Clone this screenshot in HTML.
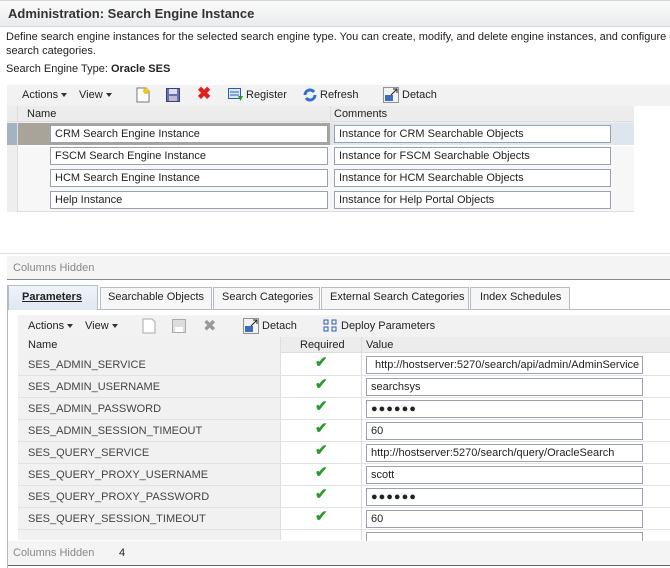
<!DOCTYPE html>
<html><head><style>
*{margin:0;padding:0;box-sizing:border-box}
body{width:670px;height:568px;overflow:hidden;background:#fff;font-family:"Liberation Sans",sans-serif;font-size:11px;color:#222;position:relative}
.a{position:absolute;white-space:nowrap}
.inp{position:absolute;height:18px;border:1px solid #9aa3ad;background:#fff;padding-left:4px;line-height:16px;font-size:11px;color:#222}
.tb{color:#222}
.dd{display:inline-block;border-left:3px solid transparent;border-right:3px solid transparent;border-top:4px solid #333;margin-left:3px;vertical-align:middle}
.row{position:absolute;left:8px;height:22px;border-bottom:1px solid #e4e4e4}
.chk{position:absolute;font-size:15px;color:#2a9a2a;font-weight:bold}
</style></head><body>
<!-- title -->
<div class="a" style="left:0;top:0;width:670px;height:27px;background:linear-gradient(#fbfbfb,#e9ebed);border-top:1px solid #d6d6d6;border-bottom:1px solid #d0d3d6"></div>
<div class="a" style="left:8px;top:6px;font-size:13px;font-weight:bold;color:#333">Administration: Search Engine Instance</div>
<div class="a" style="left:6px;top:31px">Define search engine instances for the selected search engine type. You can create, modify, and delete engine instances, and configure e</div>
<div class="a" style="left:6px;top:45px">search categories.</div>
<div class="a" style="left:6px;top:63px">Search Engine Type: <b>Oracle SES</b></div>
<!-- toolbar 1 -->
<div class="a" style="left:7px;top:85px;width:663px;height:21px;background:#f2f2f2"></div>
<div class="a tb" style="left:22px;top:89px">Actions<span class="dd"></span></div>
<div class="a tb" style="left:79px;top:89px">View<span class="dd"></span></div>
<svg class="a" style="left:135px;top:87px" width="16" height="16"><path d="M2 1h9l3 3v11H2z" fill="#fff" stroke="#777"/><circle cx="11" cy="4" r="3" fill="#f5c518"/></svg>
<svg class="a" style="left:166px;top:88px" width="14" height="14"><rect x="0.5" y="0.5" width="13" height="13" fill="#6a6fb0" stroke="#3a3f80"/><rect x="3" y="1" width="8" height="5" fill="#dde"/><rect x="3" y="8" width="8" height="5" fill="#bbc"/></svg>
<div class="a" style="left:197px;top:84px;font-size:17px;font-weight:bold;color:#e02020">✖</div>
<svg class="a" style="left:228px;top:88px" width="16" height="14"><rect x="0.5" y="0.5" width="12" height="10" fill="#dde8f6" stroke="#2c5fa8"/><path d="M2 4h9M2 7h9" stroke="#2c5fa8"/><path d="M10 8h5l-2.5 5z" fill="#2a9a2a"/></svg>
<div class="a tb" style="left:246px;top:89px">Register</div>
<svg class="a" style="left:302px;top:87px" width="16" height="16"><path d="M3 8a5 5 0 0 1 9-3M13 8a5 5 0 0 1-9 3" stroke="#2e6fd0" stroke-width="3" fill="none"/></svg>
<div class="a tb" style="left:320px;top:89px">Refresh</div>
<svg class="a" style="left:383px;top:87px" width="16" height="16"><rect x="0.5" y="0.5" width="15" height="15" fill="none" stroke="#333" stroke-dasharray="1 1"/><rect x="2" y="8" width="8" height="6" fill="#3a6fc0"/><path d="M8 8l6-6M10 2h4v4" stroke="#222" fill="none"/></svg>
<div class="a tb" style="left:402px;top:89px">Detach</div>
<!-- table 1 -->
<div class="a" style="left:7px;top:106px;width:627px;height:106px;background:#eee"></div>
<div class="a" style="left:7px;top:106px;width:627px;height:16px;background:#ececec;border-bottom:1px solid #ddd"></div>
<div class="a" style="left:17px;top:106px;width:1px;height:106px;background:#ddd"></div>
<div class="a" style="left:330px;top:106px;width:1px;height:16px;background:#ddd"></div>
<div class="a" style="left:27px;top:108px">Name</div>
<div class="a" style="left:334px;top:108px">Comments</div>
<div class="a" style="left:7px;top:123px;width:627px;height:22px;background:#dfe5ec"></div>
<div class="a" style="left:7px;top:123px;width:10px;height:22px;background:#a4b3c4"></div>
<div class="a" style="left:18px;top:123px;width:312px;height:22px;background:#a9a49a"></div>
<div class="a" style="left:18px;top:145px;width:616px;height:1px;background:#fff"></div>
<div class="a" style="left:18px;top:167px;width:616px;height:1px;background:#fff"></div>
<div class="a" style="left:18px;top:189px;width:616px;height:1px;background:#fff"></div>
<div class="a" style="left:18px;top:211px;width:616px;height:1px;background:#ddd"></div>
<div class="a" style="left:18px;top:146px;width:616px;height:65px;background:#f7f7f7"></div>
<div class="inp" style="left:50px;top:125px;width:278px">CRM Search Engine Instance</div>
<div class="inp" style="left:334px;top:125px;width:277px">Instance for CRM Searchable Objects</div>
<div class="inp" style="left:50px;top:147px;width:278px">FSCM Search Engine Instance</div>
<div class="inp" style="left:334px;top:147px;width:277px">Instance for FSCM Searchable Objects</div>
<div class="inp" style="left:50px;top:169px;width:278px">HCM Search Engine Instance</div>
<div class="inp" style="left:334px;top:169px;width:277px">Instance for HCM Searchable Objects</div>
<div class="inp" style="left:50px;top:191px;width:278px">Help Instance</div>
<div class="inp" style="left:334px;top:191px;width:277px">Instance for Help Portal Objects</div>
<!-- columns hidden -->
<div class="a" style="left:0;top:253px;width:670px;height:1px;background:#ddd"></div>
<div class="a" style="left:7px;top:256px;width:663px;height:24px;background:#f4f4f4;border-bottom:1px solid #888"></div>
<div class="a" style="left:13px;top:262px;color:#888">Columns Hidden</div>
<!-- tabs -->
<div class="a" style="left:7px;top:285px;width:663px;height:283px;border-left:1px solid #b5bcc5"></div>
<div class="a" style="left:8px;top:309px;width:662px;height:1px;background:#b5bcc5"></div>
<div class="a" style="left:8px;top:285px;width:90px;height:25px;background:linear-gradient(#f0f4f9,#dfe7f0);border:1px solid #b5bcc5;border-bottom:none"></div>
<div class="a" style="left:22px;top:291px;font-weight:bold;text-decoration:underline">Parameters</div>
<div class="a" style="left:100px;top:287px;width:112px;height:23px;background:#f6f6f6;border:1px solid #b5bcc5"></div>
<div class="a" style="left:108px;top:291px">Searchable Objects</div>
<div class="a" style="left:213px;top:287px;width:107px;height:23px;background:#f6f6f6;border:1px solid #b5bcc5"></div>
<div class="a" style="left:222px;top:291px">Search Categories</div>
<div class="a" style="left:321px;top:287px;width:148px;height:23px;background:#f6f6f6;border:1px solid #b5bcc5"></div>
<div class="a" style="left:330px;top:291px">External Search Categories</div>
<div class="a" style="left:470px;top:287px;width:100px;height:23px;background:#f6f6f6;border:1px solid #b5bcc5"></div>
<div class="a" style="left:480px;top:291px">Index Schedules</div>
<div class="a" style="left:8px;top:310px;width:662px;height:230px;background:#fff"></div>
<!-- toolbar 2 -->
<div class="a" style="left:18px;top:315px;width:652px;height:22px;background:#f2f2f2"></div>
<div class="a tb" style="left:28px;top:320px">Actions<span class="dd"></span></div>
<div class="a tb" style="left:85px;top:320px">View<span class="dd"></span></div>
<svg class="a" style="left:141px;top:318px" width="16" height="16"><path d="M2 1h9l3 3v11H2z" fill="#fff" stroke="#aaa"/></svg>
<svg class="a" style="left:172px;top:319px" width="14" height="14"><rect x="0.5" y="0.5" width="13" height="13" fill="#ddd" stroke="#aaa"/><rect x="3" y="8" width="8" height="5" fill="#fff"/></svg>
<div class="a" style="left:203px;top:316px;font-size:16px;color:#999">✖</div>
<svg class="a" style="left:243px;top:318px" width="16" height="16"><rect x="0.5" y="0.5" width="15" height="15" fill="none" stroke="#333" stroke-dasharray="1 1"/><rect x="2" y="8" width="8" height="6" fill="#3a6fc0"/><path d="M8 8l6-6M10 2h4v4" stroke="#222" fill="none"/></svg>
<div class="a tb" style="left:262px;top:320px">Detach</div>
<svg class="a" style="left:323px;top:319px" width="14" height="13"><rect x="1" y="1" width="4" height="4" fill="none" stroke="#2e5fa8"/><rect x="9" y="1" width="4" height="4" fill="none" stroke="#2e5fa8"/><rect x="1" y="8" width="4" height="4" fill="none" stroke="#2e5fa8"/><rect x="9" y="8" width="4" height="4" fill="none" stroke="#2e5fa8"/></svg>
<div class="a tb" style="left:341px;top:320px">Deploy Parameters</div>
<!-- table 2 -->
<div class="a" style="left:18px;top:337px;width:652px;height:16px;background:#ececec;border-bottom:1px solid #ddd"></div>
<div class="a" style="left:18px;top:337px;width:262px;height:203px;background:#f1f1f1"></div>
<div class="a" style="left:280px;top:337px;width:1px;height:203px;background:#ddd"></div>
<div class="a" style="left:361px;top:337px;width:1px;height:203px;background:#ddd"></div>
<div class="a" style="left:28px;top:339px">Name</div>
<div class="a" style="left:300px;top:339px">Required</div>
<div class="a" style="left:366px;top:339px">Value</div>
<div id="rows"></div>
<div class="a" style="left:18px;top:375px;width:652px;height:1px;background:#e2e2e2"></div>
<div class="a" style="left:18px;top:397px;width:652px;height:1px;background:#e2e2e2"></div>
<div class="a" style="left:18px;top:419px;width:652px;height:1px;background:#e2e2e2"></div>
<div class="a" style="left:18px;top:441px;width:652px;height:1px;background:#e2e2e2"></div>
<div class="a" style="left:18px;top:463px;width:652px;height:1px;background:#e2e2e2"></div>
<div class="a" style="left:18px;top:485px;width:652px;height:1px;background:#e2e2e2"></div>
<div class="a" style="left:18px;top:507px;width:652px;height:1px;background:#e2e2e2"></div>
<div class="a" style="left:18px;top:529px;width:652px;height:1px;background:#e2e2e2"></div>
<div class="a" style="left:28px;top:359px;color:#444">SES_ADMIN_SERVICE</div>
<div class="a" style="left:28px;top:381px;color:#444">SES_ADMIN_USERNAME</div>
<div class="a" style="left:28px;top:403px;color:#444">SES_ADMIN_PASSWORD</div>
<div class="a" style="left:28px;top:425px;color:#444">SES_ADMIN_SESSION_TIMEOUT</div>
<div class="a" style="left:28px;top:447px;color:#444">SES_QUERY_SERVICE</div>
<div class="a" style="left:28px;top:469px;color:#444">SES_QUERY_PROXY_USERNAME</div>
<div class="a" style="left:28px;top:491px;color:#444">SES_QUERY_PROXY_PASSWORD</div>
<div class="a" style="left:28px;top:513px;color:#444">SES_QUERY_SESSION_TIMEOUT</div>
<div class="chk" style="left:315px;top:353px">✔</div>
<div class="chk" style="left:315px;top:375px">✔</div>
<div class="chk" style="left:315px;top:397px">✔</div>
<div class="chk" style="left:315px;top:419px">✔</div>
<div class="chk" style="left:315px;top:441px">✔</div>
<div class="chk" style="left:315px;top:463px">✔</div>
<div class="chk" style="left:315px;top:485px">✔</div>
<div class="chk" style="left:315px;top:507px">✔</div>
<div class="inp" style="left:366px;top:356px;width:277px;padding-left:8px">http://hostserver:5270/search/api/admin/AdminService</div>
<div class="inp" style="left:366px;top:378px;width:277px">searchsys</div>
<div class="inp" style="left:366px;top:400px;width:277px;font-weight:bold;letter-spacing:1px">●●●●●●</div>
<div class="inp" style="left:366px;top:422px;width:277px">60</div>
<div class="inp" style="left:366px;top:444px;width:277px">http://hostserver:5270/search/query/OracleSearch</div>
<div class="inp" style="left:366px;top:466px;width:277px">scott</div>
<div class="inp" style="left:366px;top:488px;width:277px;font-weight:bold;letter-spacing:1px">●●●●●●</div>
<div class="inp" style="left:366px;top:510px;width:277px">60</div>
<div class="inp" style="left:366px;top:532px;width:277px;height:10px"></div>
<!-- footer -->
<div class="a" style="left:8px;top:541px;width:662px;height:25px;background:#f4f4f4;border-bottom:1px solid #666"></div>
<div class="a" style="left:13px;top:547px;color:#888">Columns Hidden</div>
<div class="a" style="left:119px;top:547px">4</div>
</body></html>
